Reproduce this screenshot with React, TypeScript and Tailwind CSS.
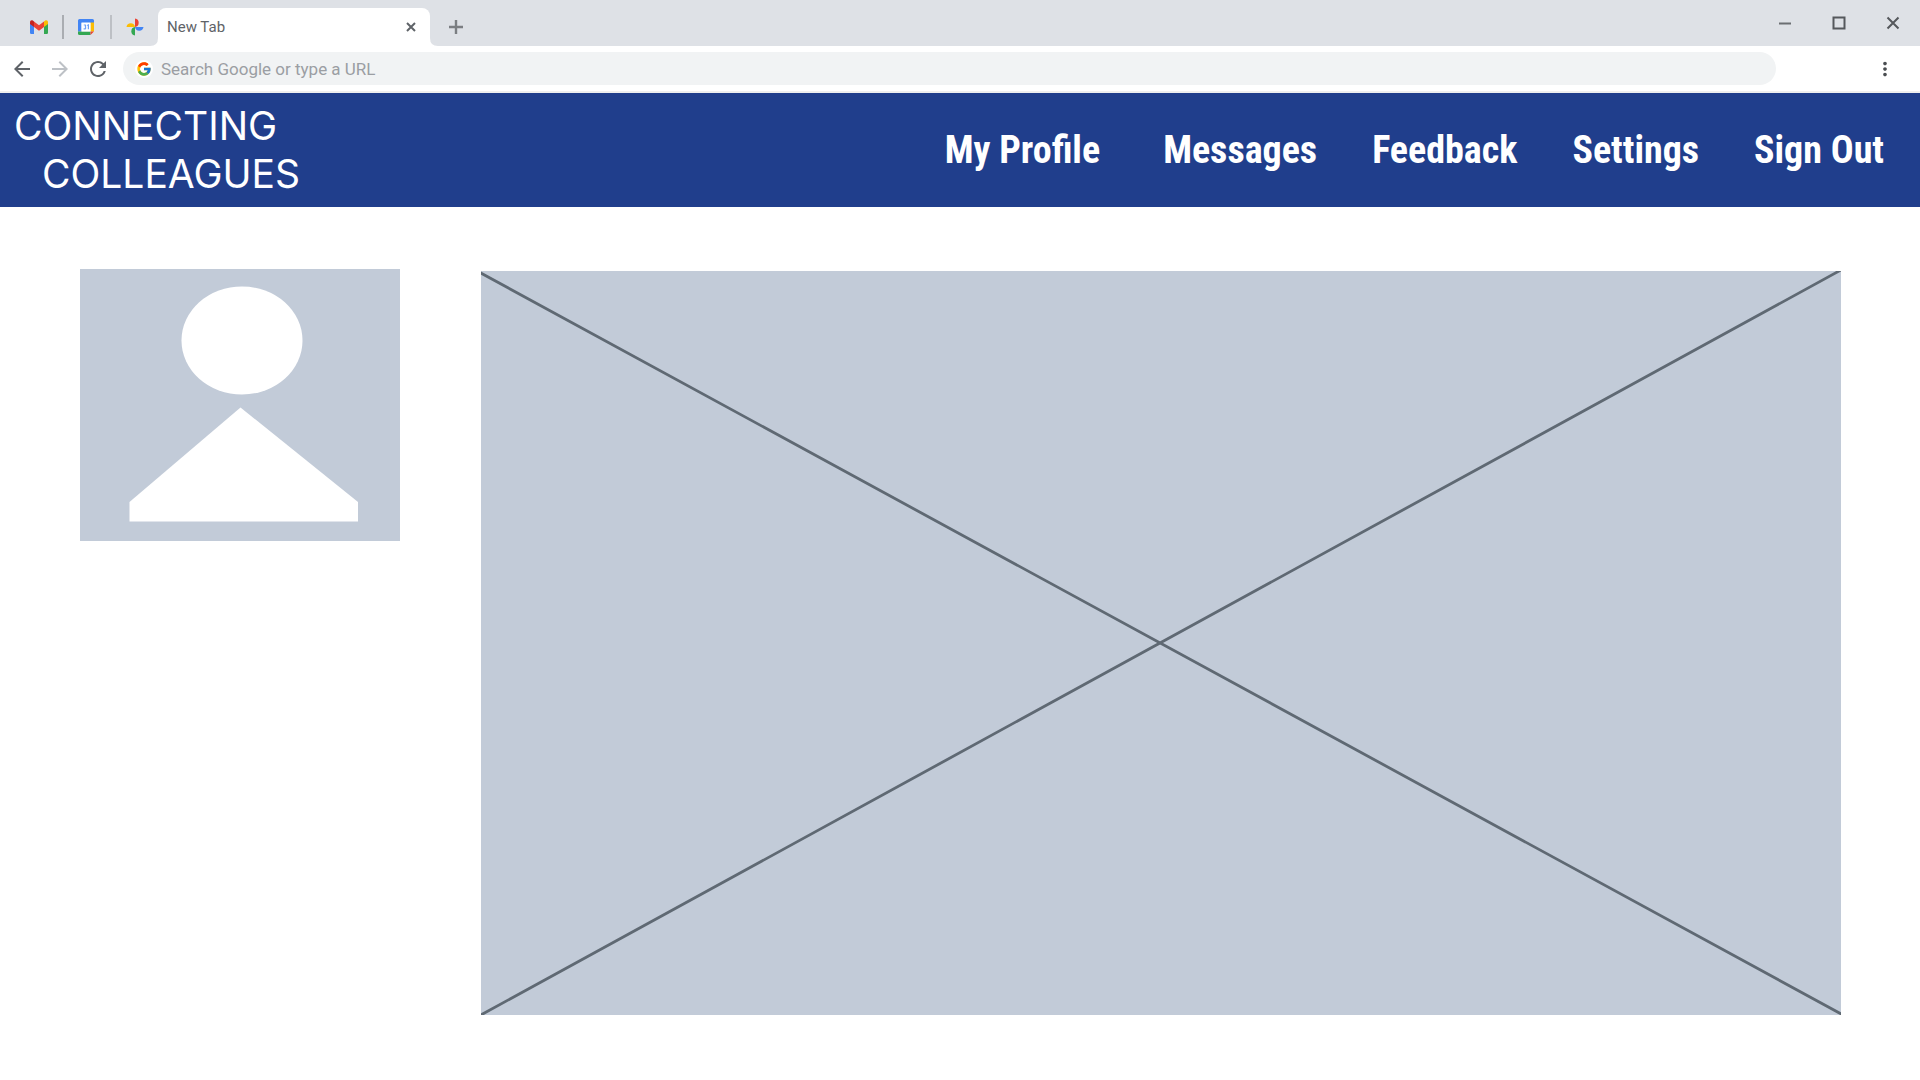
import { FcGoogle } from "react-icons/fc";
import { MdArrowBack, MdArrowForward, MdMoreVert, MdRefresh } from "react-icons/md";

const navItems = ["My Profile", "Messages", "Feedback", "Settings", "Sign Out"];

function GmailIcon() {
  return (
    <svg viewBox="0 0 18 14" className="h-[14px] w-[18px]" aria-hidden="true">
      <path fill="#4285f4" d="M0 3v9.8Q0 14 1.2 14H4V5z" />
      <path fill="#34a853" d="M14 5v9h2.8q1.2 0 1.2-1.2V3z" />
      <path fill="#c5221f" d="M0 2.2V4l4 3V1.5L2.8.6C1.4-.4 0 .6 0 2.2z" />
      <path fill="#fbbc04" d="M18 2.2V4l-4 3V1.5l1.2-.9C16.6-.4 18 .6 18 2.2z" />
      <path fill="#ea4335" d="M4 1.5V7l5 3.8L14 7V1.5L9 5.3z" />
    </svg>
  );
}

function CalendarIcon() {
  return (
    <svg viewBox="0 0 16 16" className="size-4" aria-hidden="true">
      <path fill="#4285f4" d="M1.500 0H14.500Q16 0 16 1.500V4H3.500v8.500H0V1.500Q0 0 1.500 0z" />
      <path fill="#fbbc04" d="M12.500 3.500H16v9h-3.500z" />
      <path fill="#34a853" d="M0 12.500h12.500V16h-11Q0 16 0 14.500z" />
      <path fill="#ea4335" d="M12.500 12.500H16L12.500 16z" />
      <path fill="#fff" d="M3.500 3.500h9v9h-9z" />
      <path fill="none" stroke="#6ea1f7" strokeWidth="1.200" d="M5.800 6h1.500q.8.900 0 1.900.9 1 0 2H5.600M9.200 6.500l1.200-.6v4.400" />
    </svg>
  );
}

function PhotosIcon() {
  return (
    <svg viewBox="0 0 18 18" className="size-[18px]" aria-hidden="true">
      <path fill="#ea4335" d="M9 .5A4.300 4.300 0 0 1 9 9z" />
      <path fill="#4285f4" d="M17.500 9A4.300 4.300 0 0 1 9 9z" />
      <path fill="#34a853" d="M9 17.500A4.300 4.300 0 0 1 9 9z" />
      <path fill="#fbbc04" d="M.5 9A4.300 4.300 0 0 1 9 9z" />
    </svg>
  );
}

function TabStrip() {
  return (
    <div className="flex h-[46px] items-end bg-[#dee1e6]">
      <div className="flex h-[38px] flex-1 items-stretch">
        <div className="flex items-center pr-[14px] pl-[30px]">
          <button aria-label="Gmail" className="w-[18px]"><GmailIcon /></button>
          <span className="mx-[14px] h-6 w-[2px] bg-[#aaadb2]" />
          <button aria-label="Calendar" className="w-4"><CalendarIcon /></button>
          <span className="mr-[14px] ml-4 h-6 w-[2px] bg-[#bdc0c5]" />
          <button aria-label="Photos" className="w-[18px]"><PhotosIcon /></button>
        </div>
        <div className="relative flex w-[272px] items-center justify-between rounded-t-lg bg-white pr-[13px] pl-[9px]">
          <svg viewBox="0 0 8 8" className="absolute bottom-0 -left-2 size-2" aria-hidden="true">
            <path fill="#fff" d="M8 0v8H0Q8 8 8 0z" />
          </svg>
          <svg viewBox="0 0 8 8" className="absolute -right-2 bottom-0 size-2" aria-hidden="true">
            <path fill="#fff" d="M0 0v8h8Q0 8 0 0z" />
          </svg>
          <span className="text-[15px] leading-5 text-[#5f6368]">New Tab</span>
          <button aria-label="Close tab">
            <svg viewBox="0 0 12 12" className="size-3" aria-hidden="true">
              <path stroke="#5f6368" strokeWidth="2" d="M2 2l8 8M10 2l-8 8" />
            </svg>
          </button>
        </div>
        <button aria-label="New tab" className="ml-[19px]">
          <svg viewBox="0 0 14 14" className="size-[14px]" aria-hidden="true">
            <path stroke="#7b7e82" strokeWidth="2.400" d="M7 0v14M0 7h14" />
          </svg>
        </button>
      </div>
      <div className="flex h-[46px] items-center gap-10 pr-5">
        <button aria-label="Minimize">
          <svg viewBox="0 0 14 14" className="size-[14px]" aria-hidden="true">
            <path stroke="#6b6e72" strokeWidth="2" d="M1 7.500h12" />
          </svg>
        </button>
        <button aria-label="Maximize">
          <svg viewBox="0 0 14 14" className="size-[14px]" aria-hidden="true">
            <path fill="none" stroke="#55585c" strokeWidth="2" d="M1.500 1.500h11v11h-11z" />
          </svg>
        </button>
        <button aria-label="Close window">
          <svg viewBox="0 0 14 14" className="size-[14px]" aria-hidden="true">
            <path stroke="#55585c" strokeWidth="2" d="M1.500 1.500l11 11M12.500 1.500l-11 11" />
          </svg>
        </button>
      </div>
    </div>
  );
}

function Toolbar() {
  return (
    <div className="flex h-[47px] items-center border-b-2 border-[#efefef] bg-white pr-6 pl-[10px]">
      <div className="flex gap-[14px]">
        <button aria-label="Back"><MdArrowBack className="size-6 text-[#5f6368]" /></button>
        <button aria-label="Forward"><MdArrowForward className="size-6 text-[#bdc1c6]" /></button>
        <button aria-label="Reload"><MdRefresh className="size-6 text-[#5f6368]" /></button>
      </div>
      <label className="ml-[13px] flex h-[33px] flex-1 items-center rounded-full bg-[#f1f3f4] pl-3">
        <span className="flex size-[18px] items-center justify-center rounded-full bg-white">
          <FcGoogle className="size-4" />
        </span>
        <input
          type="text"
          aria-label="Address bar"
          placeholder="Search Google or type a URL"
          className="ml-2 flex-1 bg-transparent text-[17px] leading-6 text-[#5f6368] outline-none placeholder:text-[#9b9ea3]"
        />
      </label>
      <button aria-label="Menu" className="ml-[98px]"><MdMoreVert className="size-[22px] text-[#4a4d51]" /></button>
    </div>
  );
}

function SiteHeader() {
  return (
    <header className="flex h-[114px] items-center justify-between bg-[#203e8c] pr-9 pl-[14px] text-white">
      <a href="#" className="flex flex-col font-['Inter',sans-serif] text-[39px] leading-[48px]">
        <span>CONNECTING</span>
        <span className="pl-7">COLLEAGUES</span>
      </a>
      <nav className="flex gap-[55px] font-['Liberation_Sans_Narrow','Arial_Narrow','Roboto_Condensed','Liberation_Sans',sans-serif] text-[38px] leading-[48px] font-bold">
        {navItems.map((item) => (
          <a key={item} href="#" className="whitespace-nowrap first:mr-2">{item}</a>
        ))}
      </nav>
    </header>
  );
}

export default function App() {
  return (
    <div className="min-h-screen bg-white font-['Roboto',sans-serif]">
      <TabStrip />
      <Toolbar />
      <SiteHeader />
      <main className="flex items-start gap-[81px] pt-16 pr-[79px] pl-20">
        <svg viewBox="0 0 320 272" className="-mt-[2px] w-80 shrink-0 bg-[#c2cbd8]" role="img" aria-label="Profile picture">
          <ellipse cx="162" cy="71.500" rx="60.500" ry="54" fill="#fff" />
          <path fill="#fff" d="M160.500 138.500L278 233v19.500H49.500V233z" />
        </svg>
        <svg viewBox="0 0 1360 744" className="min-w-0 flex-1 bg-[#c2cbd8]" role="img" aria-label="Image placeholder">
          <path stroke="#5f6973" strokeWidth="2.800" d="M-2 1L1362 744M-2 745L1360 -1" />
        </svg>
      </main>
    </div>
  );
}
